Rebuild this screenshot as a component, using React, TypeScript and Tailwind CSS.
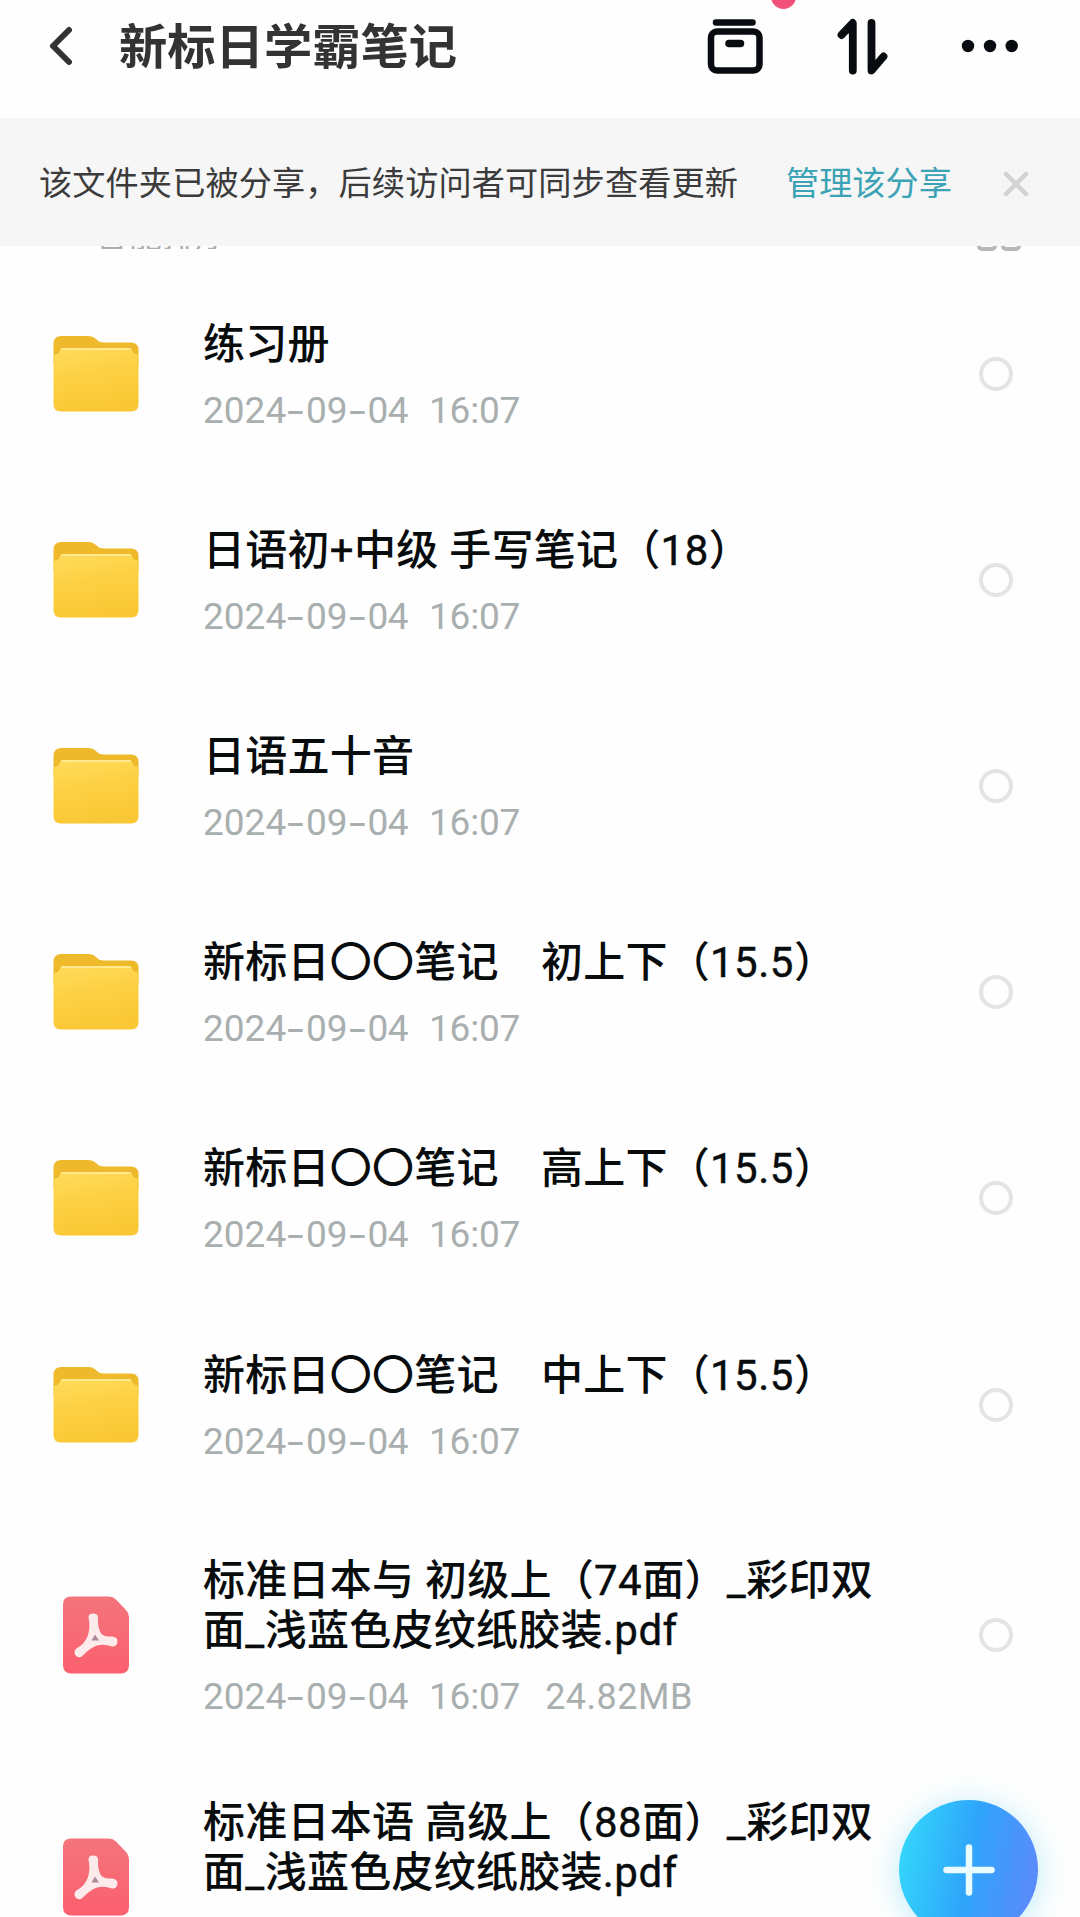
import React from "react";

type Item = { kind: "folder" | "pdf"; lines: string[]; size?: string };

const items: Item[] = [
  { kind: "folder", lines: ["练习册"] },
  { kind: "folder", lines: ["日语初+中级 手写笔记（18）"] },
  { kind: "folder", lines: ["日语五十音"] },
  { kind: "folder", lines: ["新标日〇〇笔记　初上下（15.5）"] },
  { kind: "folder", lines: ["新标日〇〇笔记　高上下（15.5）"] },
  { kind: "folder", lines: ["新标日〇〇笔记　中上下（15.5）"] },
  { kind: "pdf", lines: ["标准日本与 初级上（74面）_彩印双", "面_浅蓝色皮纹纸胶装.pdf"], size: "24.82MB" },
  { kind: "pdf", lines: ["标准日本语 高级上（88面）_彩印双", "面_浅蓝色皮纹纸胶装.pdf"], size: "24.82MB" },
];

function FolderIcon() {
  return (
    <svg className="block h-[78px] w-[88px]" viewBox="0 0 88 78">
      <defs>
        <linearGradient id="folderFront" x1="0" y1="0" x2="0.25" y2="1">
          <stop offset="0" stopColor="#ffdc5c" />
          <stop offset="0.5" stopColor="#fdd043" />
          <stop offset="1" stopColor="#fbc835" />
        </linearGradient>
      </defs>
      <path d="M1.5 9Q1.5 1 9.500 1H36Q41 1 44 4Q47 7.500 52 7.500H79Q86.500 7.500 86.500 15V30H1.500Z" fill="#efb92c" />
      <path d="M1.500 20Q7 19 7.500 16.500Q8.500 13 12 13H76Q79.500 13 80.500 16.500Q81.500 19 86.500 20V69Q86.500 76.500 79 76.500H9Q1.500 76.500 1.500 69Z" fill="url(#folderFront)" />
      <path d="M10 14H78" stroke="#ffe98c" strokeWidth="2" strokeLinecap="round" />
    </svg>
  );
}

function PdfIcon() {
  return (
    <svg className="block h-[78px] w-[66px]" viewBox="0 0 66 78">
      <defs>
        <linearGradient id="pdfSheet" x1="0" y1="0" x2="0" y2="1">
          <stop offset="0" stopColor="#f4757c" />
          <stop offset="1" stopColor="#fb5f6e" />
        </linearGradient>
      </defs>
      <path d="M8 0.500H46Q50 0.500 53 3.500L63 14Q66 17 66 21V69Q66 77.500 57.500 77.500H8.500Q0 77.500 0 69V8.500Q0 0.500 8 0.500Z" fill="url(#pdfSheet)" />
      <path
        d="M25.500 21.500Q25.500 17.500 30 17.500Q35 17.500 35 21.500Q34.500 33 38.500 38Q42 41 49 40.500Q54.500 41 54.500 45.500Q54 51 49 50.500Q41 47.500 34 49.500Q27 52 21 58.500Q17 63 13 60Q9.500 55.500 14 52Q22 48 25 39Q27.500 31 25.500 21.500Z"
        fill="#fdeaea"
      />
      <path d="M32 38.500L36 44.500H28.500Z" fill="#ab8a9b" />
    </svg>
  );
}

function Dash() {
  return (
    <span className="flex w-[21px] justify-center">
      <span className="scale-x-125 font-['Inter'] text-[36px]">-</span>
    </span>
  );
}

function Meta({ size }: { size?: string }) {
  return (
    <div className="flex h-[34px] items-center whitespace-pre text-[37px] leading-[34px] text-[#a9afaf]">
      <span className="w-[82px]">2024</span>
      <Dash />
      <span className="w-[40.500px]">09</span>
      <Dash />
      <span className="w-[61.500px] tracking-[-0.5px]">04</span>
      <span className="tracking-[-0.2px]">16:07</span>
      {size && <span className="ml-[25px] text-[36px] tracking-[0.5px]">{size}</span>}
    </div>
  );
}

// Latin runs are set lighter than the Chinese characters around them.
function Title({ text }: { text: string }) {
  return (
    <div className="h-[50px] whitespace-pre">
      {text.split(/([\x21-\x7e]+)/).map((part, i) =>
        i % 2 ? (
          <span key={i} className="font-normal tracking-[0.5px] [-webkit-text-stroke:0.4px_#080c0d]">{part}</span>
        ) : (
          part
        ),
      )}
    </div>
  );
}

function Row({ item }: { item: Item }) {
  const pdf = item.kind === "pdf";
  return (
    <div className={pdf ? "flex h-[242px] shrink-0 items-center pt-[12px]" : "flex h-[206.100px] shrink-0 items-center"}>
      <div className="flex w-[203px] shrink-0 pl-[52px]">
        {pdf ? <div className="pl-[11px]"><PdfIcon /></div> : <FolderIcon />}
      </div>
      <div className="flex flex-1 flex-col gap-[24px]">
        <div className="text-[42px] font-medium leading-[50px] tracking-[0.25px] text-[#080c0d]">
          {item.lines.map((l) => (
            <Title key={l} text={l} />
          ))}
        </div>
        <Meta size={item.size} />
      </div>
      <div className="mr-[67px] size-[34px] shrink-0 rounded-full border-[4.500px] border-[#e3e4e4]" />
    </div>
  );
}

export default function App() {
  return (
    <div className="relative flex h-[1917px] w-[1080px] flex-col overflow-hidden bg-[#fefefe] font-['Roboto','Noto_Sans_CJK_SC',sans-serif]">
      <header className="flex h-[118px] shrink-0 items-start bg-[#fefefe]">
        <svg className="ml-[46px] mt-[23px] h-[46px] w-[30px]" viewBox="0 0 30 46" fill="none" stroke="#333" strokeWidth="6" strokeLinecap="round" strokeLinejoin="round">
          <path d="M23 7L7 23L23 39" />
        </svg>
        <h1 className="ml-[43px] mt-[18px] whitespace-nowrap text-[48.300px] font-bold leading-[60px] text-[#333]">新标日学霸笔记</h1>
        <div className="flex-1" />
        <svg className="h-[80px] w-[320px]" viewBox="700 0 320 80" fill="none" stroke="#080c10" strokeWidth="6.500" strokeLinecap="round" strokeLinejoin="round">
          <circle cx="783.500" cy="-3.500" r="12.500" fill="#f0507a" stroke="none" />
          <path d="M716 22.500H752.500" />
          <rect x="711" y="31.500" width="48.500" height="39" rx="6" />
          <path d="M729 43.500H740.500" strokeWidth="7.500" />
          <path d="M841.500 35L852.800 23V70.500" strokeWidth="7.800" />
          <path d="M871.500 23V70.500L883.500 56.500" strokeWidth="7.800" />
          <path d="M852.800 23L845 33L852.800 30ZM871.500 70.500L880 60.500L871.500 63Z" fill="#080c10" strokeWidth="3" />
          <g fill="#080c10" stroke="none">
            <circle cx="968" cy="46" r="6.200" />
            <circle cx="990" cy="46" r="6.200" />
            <circle cx="1011.700" cy="46" r="6.200" />
          </g>
        </svg>
        <div className="w-[60px] shrink-0" />
      </header>

      <div className="flex h-[128px] shrink-0 items-center bg-[#f6f6f6] pl-[39px] pt-[4px] text-[33.200px] leading-[48px]">
        <span className="w-[747px] whitespace-nowrap tracking-[0.1px] text-[#3b3b3b]">该文件夹已被分享，后续访问者可同步查看更新</span>
        <span className="w-[217px] whitespace-nowrap text-[#3ba3b5]">管理该分享</span>
        <svg className="size-[26px]" viewBox="0 0 26 26" stroke="#d2d2d2" strokeWidth="4.500" strokeLinecap="round">
          <path d="M3 3L23 23M23 3L3 23" />
        </svg>
      </div>

      <div className="flex h-[25px] shrink-0 items-start justify-between pl-[95px] pr-[59px]">
        <div className="flex h-[3px] items-end overflow-hidden text-[33.500px] leading-[40px] text-[#a9afaf]">
          <span className="-mb-[7px]">智能排序</span>
        </div>
        <div className="flex h-[5px] items-end gap-[4px] overflow-hidden">
          <div className="size-[20px] shrink-0 rounded-[5px] border-[4px] border-[#b4b8b8]" />
          <div className="size-[20px] shrink-0 rounded-[5px] border-[4px] border-[#b4b8b8]" />
        </div>
      </div>

      <main className="flex flex-col">
        {items.map((it) => (
          <Row key={it.lines[0]} item={it} />
        ))}
      </main>

      <button className="absolute left-[899px] top-[1800px] flex size-[139px] items-center justify-center rounded-full bg-[linear-gradient(100deg,#33d3fb_8%,#2fa5fb_50%,#5a8bfb_92%)] shadow-[0_4px_30px_rgba(60,200,240,0.35)]">
        <svg className="size-[52px]" viewBox="0 0 52 52" stroke="#e9fdff" strokeWidth="6.500" strokeLinecap="round">
          <path d="M26 3.500V48.500M3.500 26H48.500" />
        </svg>
      </button>
    </div>
  );
}
